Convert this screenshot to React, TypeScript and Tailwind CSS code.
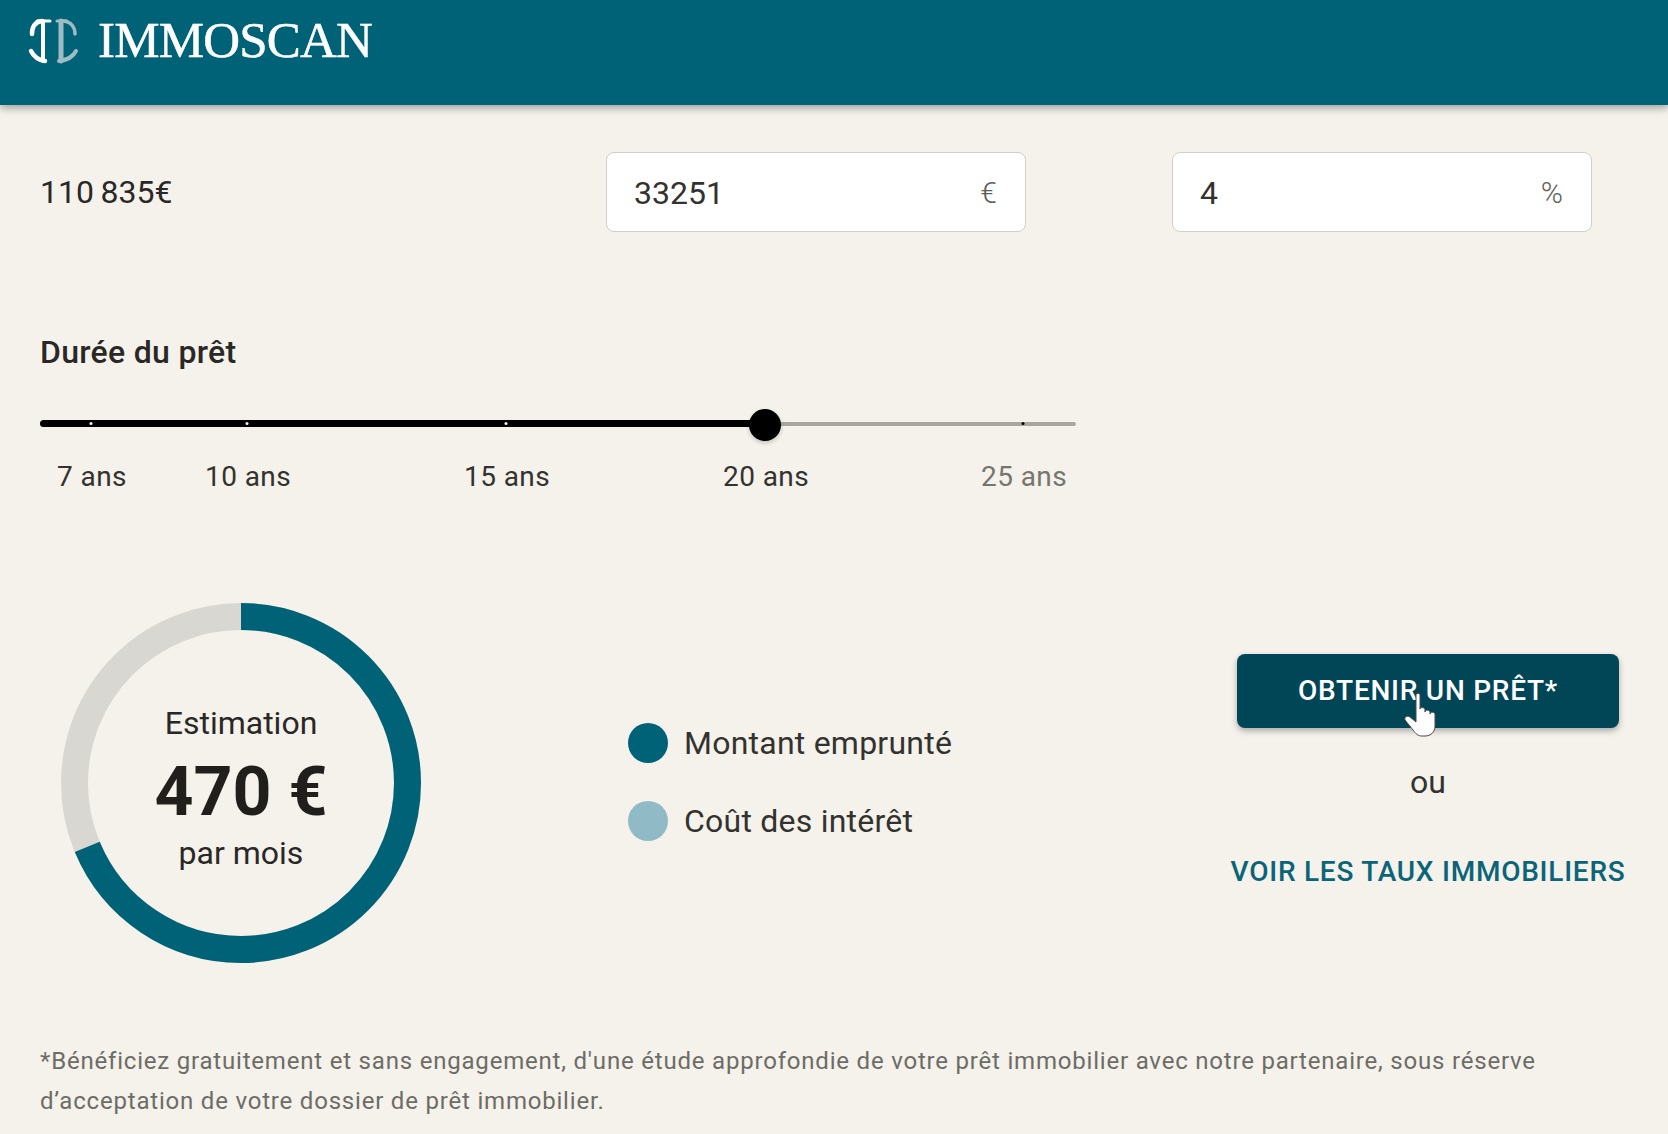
const ticks = [
  { label: "7 ans", left: 51, cell: "w-[102px]" },
  { label: "10 ans", left: 207, cell: "w-[210px]" },
  { label: "15 ans", left: 466, cell: "w-[308px]" },
  { label: "20 ans", left: 725, cell: "w-[210px]" },
  { label: "25 ans", left: 983, cell: "w-[306px] text-[#77756f]" },
];

function Logo() {
  return (
    <svg width="70" height="60" viewBox="0 0 70 60" fill="none" strokeLinecap="round">
      <g stroke="#ffffff">
        <path d="M17 10H30" strokeWidth="3" />
        <path d="M23 10V50" strokeWidth="4" />
        <path d="M22 10C15 11 12 16 12 23" strokeWidth="4.500" />
        <path d="M11 40C14 46 18 49 25 50" strokeWidth="4.500" />
      </g>
      <g stroke="#9fbcc4">
        <path d="M37 10H47" strokeWidth="3" />
        <path d="M41 10V50" strokeWidth="5" />
        <path d="M44 10C51 11 55 16 55 23" strokeWidth="3.500" />
        <path d="M56 40C53 46 48 49 39 50" strokeWidth="4" />
      </g>
    </svg>
  );
}

function HandCursor() {
  return (
    <svg
      className="absolute left-[166px] top-[38px]"
      width="38"
      height="46"
      viewBox="0 0 38 46"
    >
      <path
        d="M13 3C13 1 17 1 17 3V17C17 15 22 15 22 18V20C22 17.500 27 17.500 27 20.500V22C27 19.500 32 19.500 32 22.500V34C32 40 28 44 22 44H19C15 44 13 42 10 38L2 28C1 25 4 23 7 25L13 30Z"
        fill="#ffffff"
        stroke="#4a4a4a"
        strokeWidth="1"
        strokeLinejoin="round"
      />
    </svg>
  );
}

function Ring() {
  // un peu moins de 70% de l'anneau en teal, le reste en gris
  const r = 166.5;
  const c = 2 * Math.PI * r;
  return (
    <div className="relative w-[360px] h-[360px] shrink-0">
      <svg className="absolute inset-0" width="360" height="360" viewBox="0 0 360 360">
        <circle cx="180" cy="180" r={r} fill="none" stroke="#d8d7d2" strokeWidth="27" />
        <circle
          cx="180"
          cy="180"
          r={r}
          fill="none"
          stroke="#006277"
          strokeWidth="27"
          strokeDasharray={`${c * 0.687} ${c}`}
          transform="rotate(-90 180 180)"
        />
      </svg>
      <div className="relative h-full pt-[9px] flex flex-col items-center justify-center text-[#2a2826]">
        <span className="text-[32px] leading-[40px] mb-[8px]">Estimation</span>
        <span className="text-[68px] leading-[82px] font-bold text-[#211f1c]">470 €</span>
        <span className="text-[32px] leading-[40px]">par mois</span>
      </div>
    </div>
  );
}

function Field({ value, unit }: { value: string; unit: string }) {
  return (
    <div className="h-[80px] w-[420px] flex items-center justify-between pl-[27px] pr-7 bg-white border border-[#d0cfca] rounded-lg">
      <span className="text-[32px] text-[#33322f] pt-[2px]">{value}</span>
      <span className="text-[30px] font-light text-[#5f5e59]">{unit}</span>
    </div>
  );
}

export default function App() {
  return (
    <div className="min-h-[1134px] bg-[#f4f2eb] font-['Roboto',sans-serif] text-[#2a2826] overflow-hidden">
      <header className="h-[105px] bg-[#006277] shadow-[0_3px_8px_rgba(0,0,0,0.35)] flex items-start pl-[20px] pt-[11px]">
        <Logo />
        <span className="ml-[8px] mt-[-3px] font-['Liberation_Serif',serif] text-[51px] leading-[64px] tracking-[-0.8px] text-white [-webkit-text-stroke:0.5px_white]">
          IMMOSCAN
        </span>
      </header>

      <main className="pl-10">
        <div className="pt-[47px] grid grid-cols-[566px_566px_420px] items-center">
          <span className="text-[32px] text-[#2a2826]">110{"\u2009"}835€</span>
          <Field value="33251" unit="€" />
          <Field value="4" unit="%" />
        </div>

        <h2 className="mt-[100px] text-[32px] leading-[40px] font-medium tracking-[0.3px] text-[#2a2826]">Durée du prêt</h2>

        <div className="relative mt-[50px] w-[1036px] h-[4px] rounded-full bg-[#a8a6a0]">
          <div className="absolute left-0 top-[-2px] h-[7px] w-[725px] rounded-full bg-black" />
          {ticks.map((t, i) => (
            <span
              key={t.label}
              className={`absolute top-[0px] w-[3px] h-[3px] rounded-full -translate-x-1/2 ${i === 4 ? "bg-black" : "bg-[#f4f2eb]"}`}
              style={{ left: t.left }}
            />
          ))}
          <div className="absolute left-[725px] top-[3px] w-[32px] h-[32px] -translate-x-1/2 -translate-y-1/2 rounded-full bg-black shadow-[0_2px_4px_rgba(0,0,0,0.2)]" />
        </div>

        <div className="mt-[33px] ml-[1px] flex text-[28px] leading-[36px] text-[#33322f] tracking-[0.4px]">
          {ticks.map((t) => (
            <span key={t.label} className={`${t.cell} shrink-0 text-center`}>
              {t.label}
            </span>
          ))}
        </div>

        <div className="mt-[108px] pl-[21px] flex items-center">
          <Ring />
          <div className="ml-[207px] w-[602px] pb-[2px] flex flex-col gap-[38px] text-[32px] leading-[40px] text-[#33322f] tracking-[0.23px]">
            <div className="flex items-center gap-4">
              <span className="w-[40px] h-[40px] rounded-full bg-[#006277]" />
              Montant emprunté
            </div>
            <div className="flex items-center gap-4">
              <span className="w-[40px] h-[40px] rounded-full bg-[#8fbac6]" />
              Coût des intérêt
            </div>
          </div>
          <div className="w-[396px] pb-[20px] flex flex-col items-center">
            <button className="relative w-[382px] h-[74px] rounded-lg bg-[#004656] text-white text-[28px] font-medium tracking-[0.75px] shadow-[0_3px_6px_rgba(0,0,0,0.3)]">
              OBTENIR UN PRÊT*
              <HandCursor />
            </button>
            <span className="mt-[34px] text-[32px] leading-[40px] text-[#33322f]">ou</span>
            <a className="mt-[50px] text-[28px] leading-[40px] font-medium tracking-[0.75px] text-[#0b6478] whitespace-nowrap">
              VOIR LES TAUX IMMOBILIERS
            </a>
          </div>
        </div>

        <p className="mt-[78px] w-[1570px] text-[24px] leading-[40px] tracking-[0.8px] text-[#6d6c66]">
          *Bénéficiez gratuitement et sans engagement, d'une étude approfondie de votre prêt immobilier avec notre partenaire, sous réserve d’acceptation de votre dossier de prêt immobilier.
        </p>
      </main>
    </div>
  );
}
